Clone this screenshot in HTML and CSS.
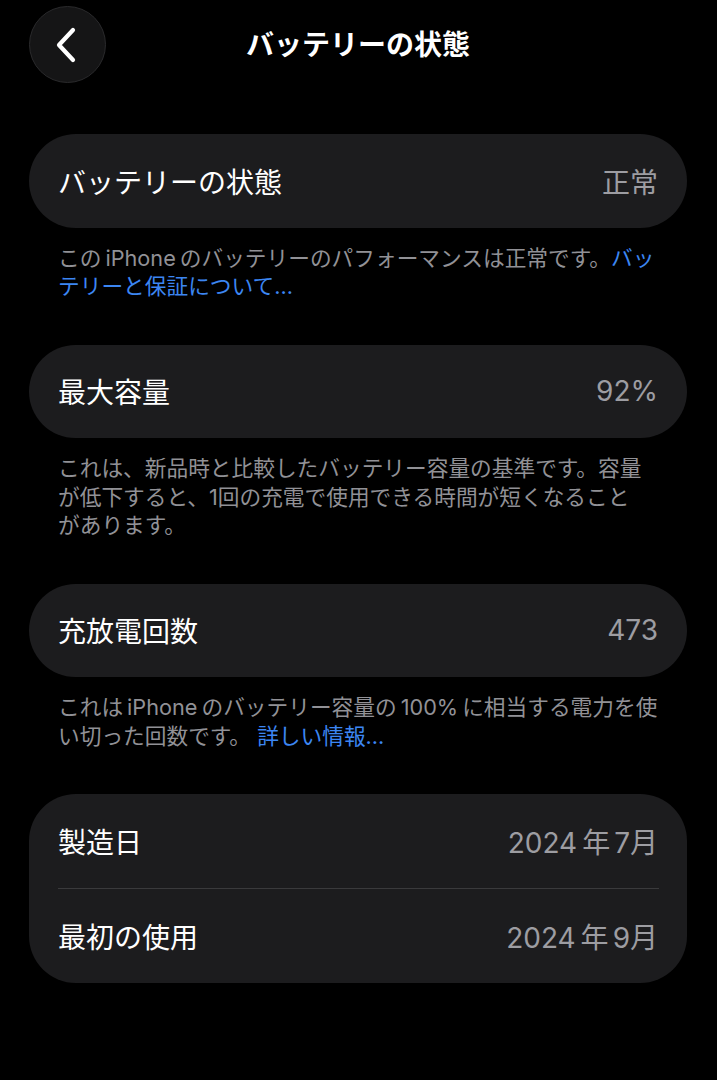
FILE: index.html
```html
<!DOCTYPE html>
<html lang="ja">
<head>
<meta charset="utf-8">
<title>バッテリーの状態</title>
<link rel="stylesheet" href="styles.css">
</head>
<body>
<div class="page">
  <header class="header">
    <div class="back">
      <svg width="30" height="40" viewBox="0 0 30 40" aria-hidden="true">
        <path d="M22 5 L8 20 L22 35" fill="none" stroke="#fff" stroke-width="4.2" stroke-linecap="round" stroke-linejoin="round"/>
      </svg>
    </div>
    <h1 class="title">バッテリーの状態</h1>
    <div class="spacer"></div>
  </header>

  <section class="group first">
    <div class="card">
      <div class="row"><span class="label">バッテリーの状態</span><span class="value">正常</span></div>
    </div>
    <p class="note">この<span class="latin">iPhone</span>のバッテリーのパフォーマンスは正常です。<a class="link">バッ<br>テリーと保証について...</a></p>
  </section>

  <section class="group">
    <div class="card">
      <div class="row"><span class="label">最大容量</span><span class="value">92%</span></div>
    </div>
    <p class="note">これは、新品時と比較したバッテリー容量の基準です。容量<br>が低下すると、1回の充電で使用できる時間が短くなること<br>があります。</p>
  </section>

  <section class="group">
    <div class="card">
      <div class="row"><span class="label">充放電回数</span><span class="value">473</span></div>
    </div>
    <p class="note">これは<span class="latin">iPhone</span>のバッテリー容量の<span class="latin">100%</span>に相当する電力を使<br>い切った回数です。 <a class="link">詳しい情報...</a></p>
  </section>

  <section class="group">
    <div class="card">
      <div class="row"><span class="label">製造日</span><span class="value">2024<span class="unit">年</span>7月</span></div>
      <div class="divider"></div>
      <div class="row"><span class="label">最初の使用</span><span class="value">2024<span class="unit">年</span>9月</span></div>
    </div>
  </section>
</div>
</body>
</html>
```

FILE: styles.css
```css
* { box-sizing: border-box; }

html, body {
  margin: 0;
  padding: 0;
  background: #000;
}

body {
  font-family: "Inter", "Noto Sans CJK JP", sans-serif;
  color: #fff;
  width: 717px;
  height: 1080px;
  overflow: hidden;
}

.page {
  padding: 6px 30px 0 29px;
}

.header {
  display: grid;
  grid-template-columns: 77px 1fr 77px;
  align-items: center;
  height: 77px;
}

.back {
  width: 77px;
  height: 77px;
  border-radius: 50%;
  background: #151516;
  border: 1.5px solid #2a2a2c;
  display: flex;
  align-items: center;
  justify-content: center;
  padding-right: 4px;
}

.title {
  margin: 0;
  text-align: center;
  font-size: 28px;
  font-weight: 700;
  line-height: 1;
}

.group.first {
  margin-top: 51px;
}

.group {
  margin-bottom: 44px;
}

.card {
  background: #1c1c1e;
  border-radius: 47px;
  padding: 0 29px;
}

.row {
  height: 93.5px;
  display: flex;
  align-items: center;
  justify-content: space-between;
}

.label {
  font-size: 28px;
  color: #fff;
}

.value {
  font-size: 28px;
  color: #9d9da2;
}

.unit {
  margin: 0 4px 0 5px;
}

.divider {
  height: 1.5px;
  background: #3a3a3c;
  margin-right: -1px;
}

.note {
  margin: 0;
  padding: 16px 0 0 29px;
  font-size: 21.7px;
  line-height: 28.5px;
  color: #919196;
}

.latin {
  margin: 0 4px;
}

.link {
  color: #3c86f2;
}
```
